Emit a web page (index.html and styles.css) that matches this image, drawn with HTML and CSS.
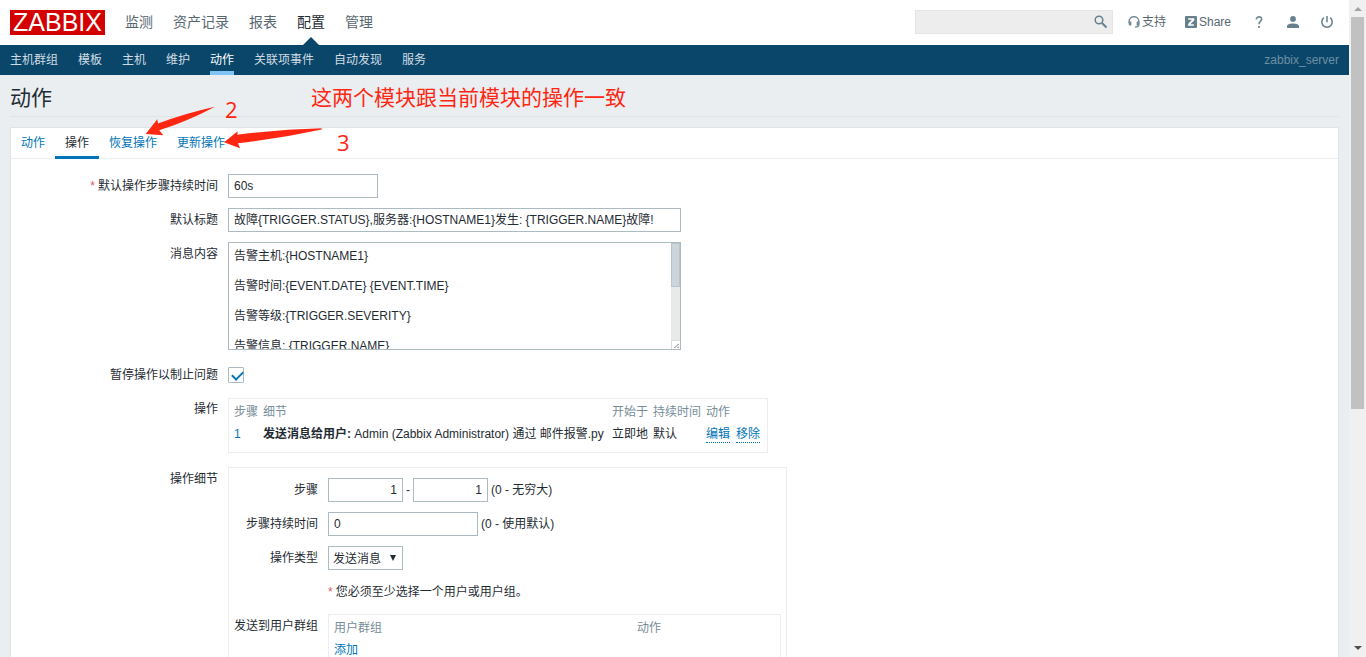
FILE: index.html
```html
<!DOCTYPE html>
<html lang="zh-CN">
<head>
<meta charset="utf-8">
<title>动作</title>
<meta name="viewport" content="width=device-width, initial-scale=1">
<link rel="stylesheet" href="styles.css">
</head>
<body>
<div class="shell">
  <div class="page">
    <header class="top">
      <a class="logo" href="#">ZABBIX</a>
      <nav class="main-nav">
        <a href="#">监测</a>
        <a href="#">资产记录</a>
        <a href="#">报表</a>
        <a href="#" class="selected">配置</a>
        <a href="#">管理</a>
      </nav>
      <form class="search">
        <input type="text" aria-label="搜索">
        <button type="button" aria-label="搜索">
          <svg width="14" height="14" viewBox="0 0 14 14"><circle cx="5" cy="5" r="3.800" fill="none" stroke="#66808d" stroke-width="1.500"/><path d="M8 8l4.500 4.500" stroke="#66808d" stroke-width="1.900"/></svg>
        </button>
      </form>
      <div class="user-nav">
        <a href="#" class="with-text">
          <svg width="12" height="12" viewBox="0 0 12 12"><path d="M1.200 7V5a4.800 4.300 0 0 1 9.600 0v3.500c0 1.500-1 2.500-3.800 2.500" fill="none" stroke="#768d99" stroke-width="1.500"/><path d="M.6 5.600h2.800v4H2A1.500 1.500 0 0 1 .6 8zM8.600 5.600h2.800V8A1.500 1.500 0 0 1 10 9.600H8.600z" fill="#768d99"/></svg>
          <span>支持</span>
        </a>
        <a href="#" class="with-text">
          <svg width="12" height="12" viewBox="0 0 12 12"><rect width="12" height="12" rx="1" fill="#66808d"/><path d="M3.200 3.100h5.400v.9L4.200 8.100M3.200 8.900h5.600" fill="none" stroke="#fff" stroke-width="1.500"/><path d="M8.300 3.200L3.700 8.700" stroke="#fff" stroke-width="1.500"/></svg>
          <span>Share</span>
        </a>
        <a href="#" class="icon-link" aria-label="帮助">
          <svg width="12" height="12" viewBox="0 0 12 12"><path d="M3.400 3.400C3.400 1.700 4.500.9 6 .9s2.600.9 2.600 2.300C8.600 5.200 6 5.300 6 8.200" fill="none" stroke="#768d99" stroke-width="1.700"/><path d="M5.100 10h1.800v2H5.100z" fill="#768d99"/></svg>
        </a>
        <a href="#" class="icon-link" aria-label="用户资料">
          <svg width="12" height="12" viewBox="0 0 12 12"><circle cx="6" cy="2.900" r="2.900" fill="#66808d"/><path d="M0 12V10.200C0 8.200 3 7.400 6 7.400s6 .8 6 2.800V12z" fill="#66808d"/></svg>
        </a>
        <a href="#" class="icon-link" aria-label="退出">
          <svg width="12" height="12" viewBox="0 0 12 12"><path d="M3 1.700a5.200 5.200 0 1 0 6 0M6 0v6.300" fill="none" stroke="#66808d" stroke-width="1.500"/></svg>
        </a>
      </div>
    </header>
    <nav class="sub-nav">
      <a href="#">主机群组</a>
      <a href="#">模板</a>
      <a href="#">主机</a>
      <a href="#">维护</a>
      <a href="#" class="selected">动作</a>
      <a href="#">关联项事件</a>
      <a href="#">自动发现</a>
      <a href="#">服务</a>
      <span class="server">zabbix_server</span>
    </nav>
    <div class="title-bar"><h1>动作</h1></div>
    <main class="panel">
      <nav class="tabs">
        <a href="#">动作</a>
        <a href="#" class="active">操作</a>
        <a href="#">恢复操作</a>
        <a href="#">更新操作</a>
      </nav>
      <form class="form">
        <label class="required" for="period">默认操作步骤持续时间</label>
        <div><input class="short" id="period" type="text" value="60s"></div>

        <label for="subject">默认标题</label>
        <div><input class="wide" id="subject" type="text" value="故障{TRIGGER.STATUS},服务器:{HOSTNAME1}发生: {TRIGGER.NAME}故障!"></div>

        <label for="message">消息内容</label>
        <div class="message wide">
          <textarea id="message">告警主机:{HOSTNAME1}

告警时间:{EVENT.DATE} {EVENT.TIME}

告警等级:{TRIGGER.SEVERITY}

告警信息: {TRIGGER.NAME}

告警项目:{TRIGGER.KEY1}

问题详情:{ITEM.NAME}:{ITEM.VALUE}

当前状态:{TRIGGER.STATUS}:{ITEM.VALUE1}

事件ID:{EVENT.ID}
</textarea>
          <div class="bar" aria-hidden="true">
            <i></i>
            <svg width="9" height="9" viewBox="0 0 9 9"><path d="M0 0h9v9H0z" fill="#fff"/><path d="M0 .5h9M.5 0v9" stroke="#dcdcdc"/><path d="M3.500 8L8 3.500M6.500 8L8 6.500" stroke="#444" stroke-dasharray="1 .5"/></svg>
          </div>
        </div>

        <label for="pause">暂停操作以制止问题</label>
        <div class="check"><input id="pause" type="checkbox" checked></div>

        <span class="caption">操作</span>
        <div class="box operations">
          <table>
            <thead><tr><th>步骤</th><th class="details">细节</th><th>开始于</th><th>持续时间</th><th>动作</th></tr></thead>
            <tbody><tr>
              <td><span class="step">1</span></td>
              <td><b>发送消息给用户:</b> Admin (Zabbix Administrator) 通过 邮件报警.py</td>
              <td>立即地</td>
              <td>默认</td>
              <td><div class="actions"><a href="#">编辑</a><a href="#">移除</a></div></td>
            </tr></tbody>
          </table>
        </div>

        <span class="caption">操作细节</span>
        <div class="box sub-form">
          <label for="step-from">步骤</label>
          <div class="inline"><input class="number" id="step-from" type="text" value="1"><span>-</span><input class="number" type="text" value="1" aria-label="结束步骤"><span>(0 - 无穷大)</span></div>
          <label for="step-period">步骤持续时间</label>
          <div class="inline"><input class="short" id="step-period" type="text" value="0"><span>(0 - 使用默认)</span></div>
          <label for="op-type">操作类型</label>
          <div><select id="op-type"><option>发送消息</option></select></div>
          <p class="note required">您必须至少选择一个用户或用户组。</p>
          <span class="caption">发送到用户群组</span>
          <div class="box groups">
            <table>
              <thead><tr><th class="group">用户群组</th><th>动作</th></tr></thead>
              <tbody><tr><td colspan="2"><a href="#">添加</a></td></tr></tbody>
            </table>
          </div>
        </div>
      </form>
    </main>
    <div class="notes">
      <svg class="arrows" width="340" height="160" viewBox="0 0 340 160"><path d="M145.700 134L157.300 119.300 158 123.500Q186 113 215 106.700 188 121 159.300 130.300L163.300 135.300ZM224 142.300L237.700 131.300 237.300 134.700Q280 129.500 321.700 128.300V129.500Q280 138.500 238 143.300L240 148.300Z" fill="#ff2612"/></svg>
      <span class="note-text">这两个模块跟当前模块的操作一致</span>
      <span class="note-two">2</span>
      <span class="note-three">3</span>
    </div>
  </div>
  <div class="rail" aria-hidden="true"><i class="up"></i><i class="thumb"></i><i class="down"></i></div>
</div>
</body>
</html>
```

FILE: styles.css
```css
* { box-sizing: border-box; }

body {
  margin: 0;
  background: #ebeef0;
  color: #1f2c33;
  font: 12px/24px "Liberation Sans", "Noto Sans CJK SC", sans-serif;
}

a { color: #0275b8; text-decoration: none; }

.shell { display: flex; height: 100vh; overflow: hidden; }
.page { position: relative; flex: 1; min-width: 0; overflow: hidden; }

/* Header */
.top {
  display: flex;
  align-items: center;
  height: 45px;
  padding: 0 16px 0 10px;
  background: #fff;
}
.logo {
  width: 95px;
  height: 25px;
  background: #d40000;
  color: #fff;
  font-size: 25px;
  line-height: 25px;
  text-align: center;
}
.main-nav { display: flex; gap: 20px; margin-left: 20px; font-size: 14px; line-height: 45px; }
.main-nav a { position: relative; color: #57676f; }
.main-nav .selected { color: #1f2c33; }
.main-nav .selected::after {
  content: "";
  position: absolute;
  bottom: 0;
  left: calc(50% - 8px);
  border: 8px solid transparent;
  border-top: 0;
  border-bottom-color: #0a466a;
}
.search { position: relative; width: 198px; margin: 0 0 1px auto; }
.search input { display: block; width: 100%; background: #ededed; border-color: #e3e5e6; }
.search button {
  position: absolute;
  top: 5px;
  right: 5px;
  display: flex;
  padding: 0;
  border: 0;
  background: none;
}
.user-nav { display: flex; align-items: center; height: 44px; margin: 0 0 1px 15px; }
.user-nav a { display: flex; align-items: center; color: #57676f; }
.with-text { gap: 2px; margin-right: 19px; }
.icon-link { margin-left: 22px; }
.with-text + .icon-link { margin-left: 3px; }

.sub-nav {
  display: flex;
  gap: 20px;
  height: 30px;
  padding: 0 10px;
  background: #0a466a;
  line-height: 30px;
}
.sub-nav a { color: #d0dce3; }
.sub-nav .selected { color: #fff; box-shadow: inset 0 -4px #7fc4f5; }
.server { margin-left: auto; color: #6e8fa3; }

.title-bar { height: 42px; margin: 0 10px 10px; border-bottom: 1px solid #dfe4e7; }
h1 { margin: 0; font-size: 21px; font-weight: 400; line-height: 45px; }

/* Panel */
.panel { margin: 0 10px; background: #fff; border: 1px solid #dfe4e7; }
.tabs { display: flex; height: 31px; border-bottom: 1px solid #ebeef0; line-height: 30px; }
.tabs a { height: 31px; padding: 0 10px; }
.tabs .active { color: #1f2c33; box-shadow: inset 0 -3px #0275b8; }

.form {
  display: grid;
  grid-template-columns: 207px 1fr;
  gap: 10px;
  padding: 15px 0 10px;
}
.form label, .caption { text-align: right; }
.form > * { min-width: 0; }
.required::before { content: "*"; margin-right: 3px; color: #e45959; }

input, textarea, select {
  margin: 0;
  border: 1px solid #acbbc2;
  border-radius: 0;
  background: #fff;
  color: #1f2c33;
  font: inherit;
}
input[type="text"] { display: block; height: 24px; padding: 0 5px; }
.short { width: 150px; }
.wide { width: 453px; }
input.number { width: 75px; text-align: right; }

.message { position: relative; margin-bottom: 3px; }
textarea {
  display: block;
  width: 100%;
  height: 108px;
  padding: 6px 14px 5px 5px;
  line-height: 15px;
  resize: none;
  overflow: hidden;
}
.bar {
  position: absolute;
  top: 1px;
  right: 1px;
  bottom: 1px;
  display: flex;
  flex-direction: column;
  justify-content: space-between;
  width: 9px;
  background: #e9e9e9;
}
.bar i { height: 44px; background: #ccd5d9; border: 1px solid #b9c5cb; }

.check { display: flex; align-items: center; height: 24px; }
input[type="checkbox"] {
  position: relative;
  width: 16px;
  height: 16px;
  border-radius: 1px;
  appearance: none;
}
input[type="checkbox"]:checked::after {
  content: "";
  position: absolute;
  top: 3px;
  left: 3px;
  width: 9px;
  height: 5px;
  border: solid #0275b8;
  border-width: 0 0 2px 2px;
  transform: rotate(-45deg);
}

.box { border: 1px solid #ebeef0; }
table { width: 100%; border-collapse: collapse; line-height: 22px; }
th { color: #768d99; font-weight: 400; text-align: left; }
th, td { padding: 0 5px 0 0; white-space: nowrap; }
th:last-child, td:last-child { padding-right: 0; }
.operations { width: 540px; margin: 1px 0 4px; padding: 2px 5px 7px; }
.details { width: 100%; }
.step { color: #0275b8; }
.actions { display: flex; gap: 6px; padding: 2px 2px 0 0; }
.actions a { line-height: 15px; border-bottom: 1px dotted #0275b8; }

.sub-form {
  display: grid;
  grid-template-columns: 84px 453px;
  gap: 10px;
  width: 559px;
  padding: 10px 5px;
}
.inline { display: flex; gap: 3px; }
select {
  display: block;
  width: 75px;
  height: 24px;
  padding: 0 4px;
  appearance: none;
  background: #fff url("data:image/svg+xml,%3Csvg xmlns='http://www.w3.org/2000/svg' width='6' height='6'%3E%3Cpath d='M0 0h6L3 6z' fill='%231f2c33'/%3E%3C/svg%3E") no-repeat right 6px top 8px;
}
.note { grid-column: 2; margin: 0; }
.groups { padding: 2px 5px; }
.group { width: 303px; }

/* Markup drawn over the page */
.notes { color: #ff2612; font-size: 21px; pointer-events: none; }
.arrows, .note-text, .note-two, .note-three { position: absolute; }
.arrows { top: 0; left: 0; }
.note-text { top: 86px; left: 311px; }
.note-two, .note-three { font-family: "Open Sans", sans-serif; font-size: 22px; }
.note-two { top: 97px; left: 225px; }
.note-three { top: 130px; left: 337px; }

/* Window scroll bar */
.rail {
  display: flex;
  flex: 0 0 17px;
  flex-direction: column;
  align-items: center;
  padding: 7px 0;
  background: #f0f0f0;
}
.up, .down { border: 4px solid transparent; }
.up { border-top: 0; border-bottom-color: #a3a3a3; }
.down { margin-top: auto; border-bottom: 0; border-top-color: #505050; }
.thumb { width: 13px; height: 61%; margin-top: 6px; background: #c1c1c1; }
```
